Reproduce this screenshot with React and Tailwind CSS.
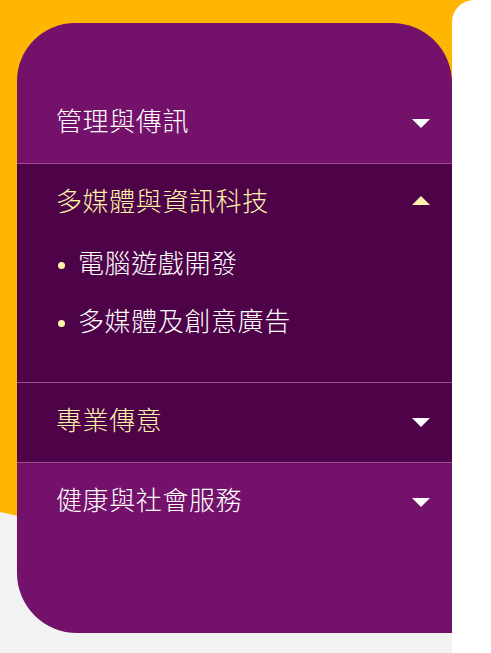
const cjk = { fontFamily: '"Noto Sans CJK TC", "Noto Sans", sans-serif' };

function Arrow({ up, cream }) {
  return (
    <svg width="18" height="9" viewBox="0 0 18 9" className={up ? "-mt-[7px]" : ""}>
      <polygon points={up ? "0,9 18,9 9,0" : "0,0 18,0 9,9"} fill={cream ? "#fff3aa" : "#ffffff"} />
    </svg>
  );
}

function Row({ label, open, dark, cream, children }) {
  return (
    <div className={dark ? "bg-[#4e0349]" : ""}>
      <div className="h-[79px] flex items-center justify-between pl-[39px] pr-[22px]">
        <span className={`text-[26px] font-light leading-none tracking-[0.6px] pb-[8px] ${cream ? "text-[#fff3aa]" : "text-white"}`}>{label}</span>
        <Arrow up={open} cream={open} />
      </div>
      {children}
    </div>
  );
}

export default function App() {
  const items = ["電腦遊戲開發", "多媒體及創意廣告"];
  return (
    <div className="relative min-h-[653px] bg-[#f2f2f2] flex" style={cjk}>
      {/* yellow backdrop */}
      <div className="absolute left-0 top-0 w-full h-[620px] bg-[#ffb600] [clip-path:polygon(0_0,100%_0,100%_620px,0_512px)]" />

      <div className="relative w-[452px] shrink-0 pt-[23px] pl-[17px]">
        <div className="h-[610px] bg-[#74126b] rounded-tl-[58px] rounded-tr-[60px] rounded-bl-[60px] overflow-hidden pt-[61px]">
          <Row label="管理與傳訊" />
          <div className="h-px bg-[#9b4a94]" />
          <Row label="多媒體與資訊科技" open dark cream>
            <ul className="pl-[41px] pt-[5px] pb-[42px] flex flex-col gap-[24px]">
              {items.map((t) => (
                <li key={t} className="h-[34px] flex items-center gap-[13px]">
                  <span className="w-[7px] h-[7px] rounded-full bg-[#fff3aa]" />
                  <span className="text-[26px] font-light leading-none tracking-[0.6px] pb-[7px] text-white">{t}</span>
                </li>
              ))}
            </ul>
          </Row>
          <div className="h-px bg-[#9b4a94]" />
          <Row label="專業傳意" dark cream />
          <div className="h-px bg-[#9b4a94]" />
          <Row label="健康與社會服務" />
        </div>
      </div>

      <div className="relative flex-1 bg-white rounded-tl-[22px]" />
    </div>
  );
}
